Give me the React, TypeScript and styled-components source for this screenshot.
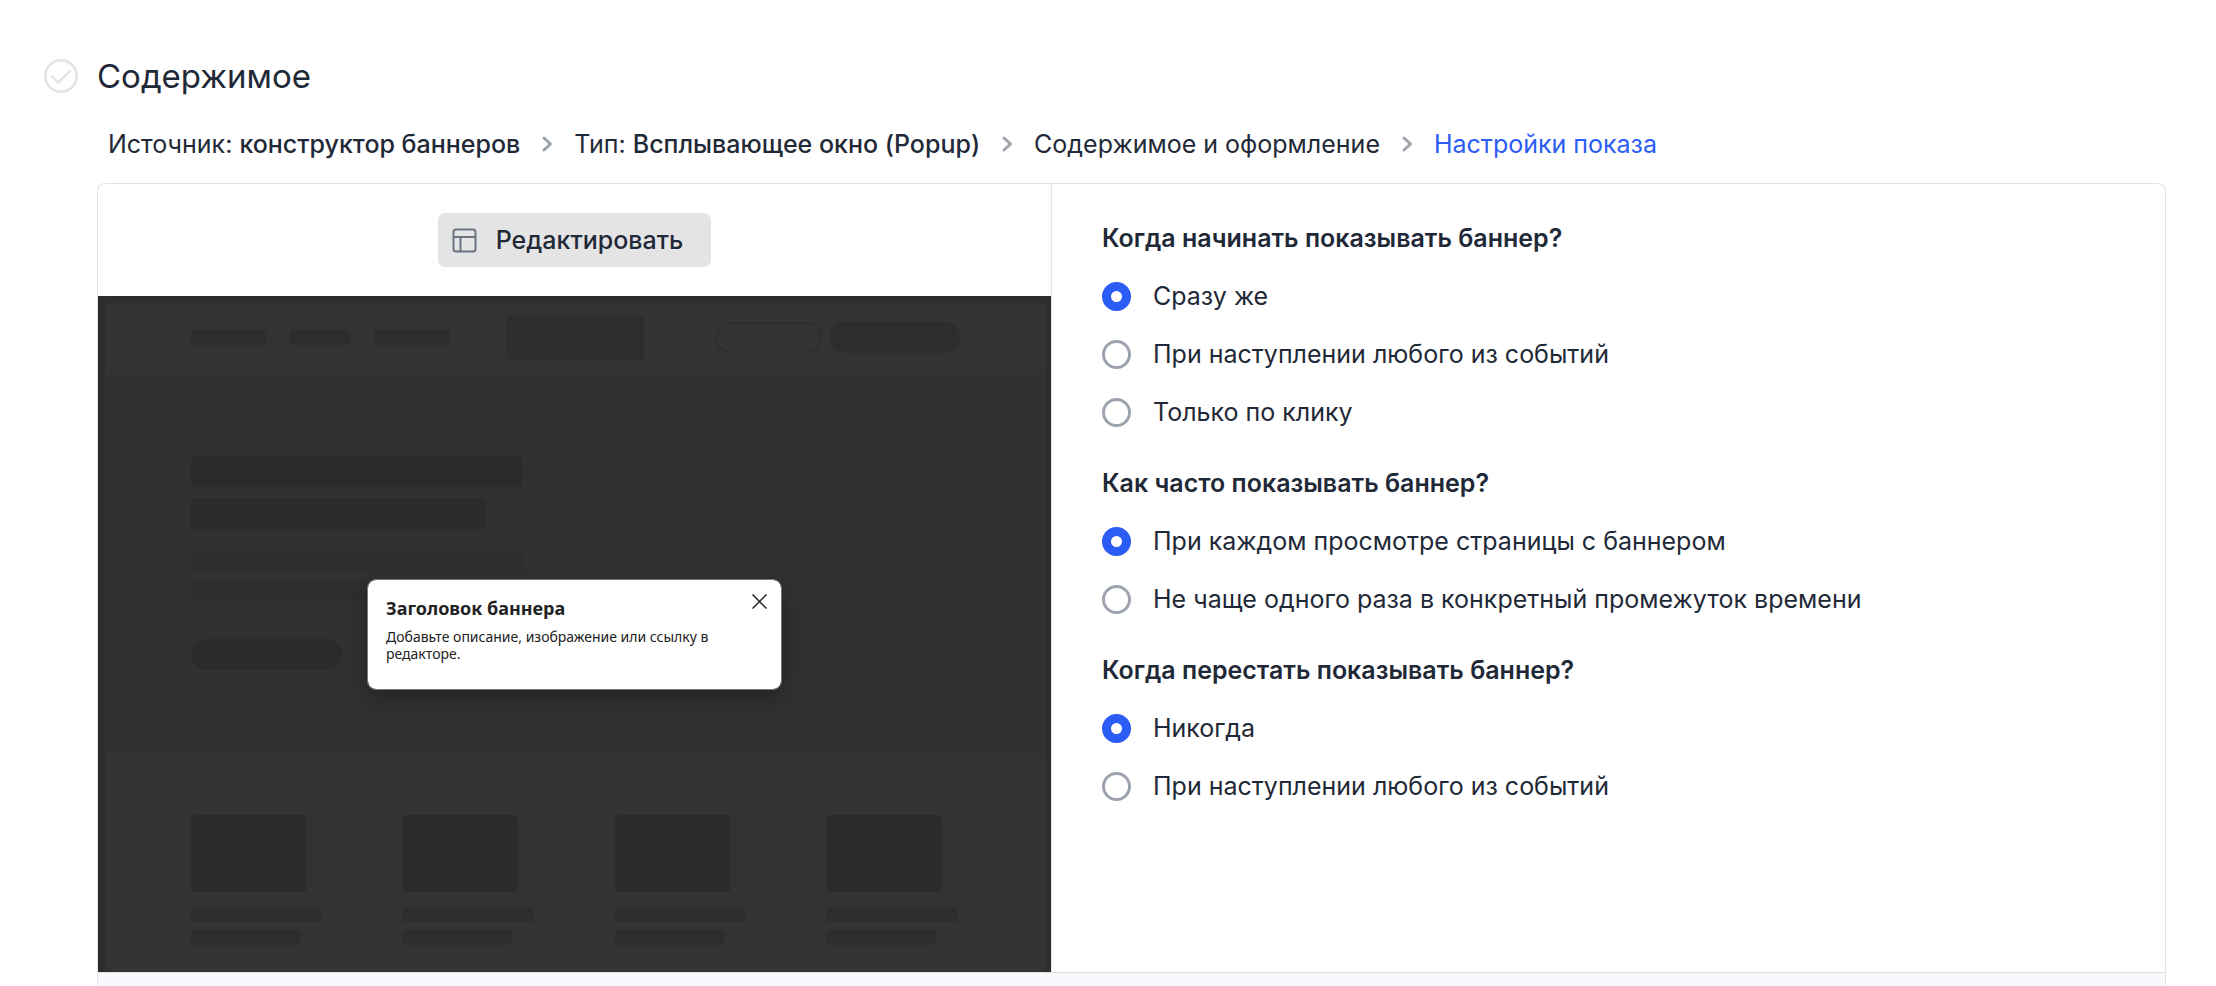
import React, { useState } from "react";
import styled, { createGlobalStyle } from "styled-components";

const GlobalStyle = createGlobalStyle`
  *, *::before, *::after { box-sizing: border-box; }
  body {
    margin: 0;
    background: #fff;
    color: #1f2937;
    font-family: Inter, "Liberation Sans", sans-serif;
    font-size: 25px;
    line-height: 30px;
  }
`;

const Page = styled.main`
  padding: 56px 50px 0 44px;
`;

const TitleRow = styled.header`
  display: flex;
  align-items: center;
  gap: 19px;
`;

const Title = styled.h1`
  margin: 0;
  font-size: 33px;
  line-height: 40px;
  font-weight: 400;
`;

const Content = styled.div`
  margin-left: 53px;
`;

const Breadcrumbs = styled.nav`
  padding: 33px 0 24px 11px;
`;

const CrumbList = styled.ol`
  display: flex;
  align-items: center;
  gap: 20px;
  margin: 0;
  padding: 0;
  list-style: none;
`;

const Crumb = styled.li`
  display: flex;
  align-items: center;
  gap: 22px;
`;

const CrumbLink = styled.a<{ $current?: boolean }>`
  color: ${(p) => (p.$current ? "#2b5cf6" : "inherit")};
  text-decoration: none;
  white-space: nowrap;
`;

const Strong = styled.strong`
  font-weight: 500;
`;

const Panel = styled.section`
  border: 1px solid #e4e4e4;
  border-bottom: 0;
  border-radius: 8px 8px 0 0;
  overflow: hidden;
`;

const Columns = styled.div`
  display: grid;
  grid-template-columns: 6fr 7fr;
`;

const PreviewColumn = styled.div`
  display: flex;
  flex-direction: column;
  border-right: 1px solid #e4e4e4;
`;

const Toolbar = styled.div`
  display: flex;
  justify-content: center;
  padding: 29px 0;
`;

const EditButton = styled.button`
  display: flex;
  align-items: center;
  gap: 19px;
  height: 54px;
  padding: 0 28px 0 14px;
  border: 0;
  border-radius: 7px;
  background: #e4e4e4;
  color: inherit;
  font: inherit;
  font-weight: 500;
  cursor: pointer;
`;

const Footer = styled.footer`
  height: 60px;
  border-top: 1px solid #e0e0e0;
  background: #f8f9fc;
`;

const Preview = styled.div`
  display: grid;
  background: #2d2d2d;
  & > * { grid-area: 1 / 1; }
`;

const Wireframe = styled.div`
  display: flex;
  flex-direction: column;
  padding: 7px 5px 0 7px;
`;

const WireHeader = styled.div`
  display: grid;
  grid-template-columns: 1fr auto 1fr;
  align-items: center;
  height: 69px;
  padding: 0 86px;
  background: #333;
`;

const WireNav = styled.div`
  display: flex;
  gap: 23px;
`;

const WireActions = styled.div`
  display: flex;
  justify-content: flex-end;
  gap: 8px;
`;

const WireHero = styled.div`
  display: flex;
  flex-direction: column;
  height: 382px;
  padding: 84px 86px 0;
  background: #313131;
`;

const WireLines = styled.div<{ $gap: number; $after: number }>`
  display: flex;
  flex-direction: column;
  gap: ${(p) => p.$gap}px;
  margin-bottom: ${(p) => p.$after}px;
`;

const WireCards = styled.div`
  display: flex;
  justify-content: space-between;
  height: 218px;
  padding: 61px 89px 0 86px;
  background: #333;
`;

const WireCard = styled.div`
  display: flex;
  flex-direction: column;
`;

const Block = styled.div<{ $w: number; $h: number; $tone?: "soft" | "faint" | "strong"; $round?: boolean }>`
  width: ${(p) => p.$w}px;
  height: ${(p) => p.$h}px;
  border-radius: ${(p) => (p.$round ? 16 : 4)}px;
  background: ${(p) => ({ soft: "#2d2d2d", faint: "#2e2e2e", strong: "#2a2b2d" })[p.$tone ?? "soft"]};
`;

const OutlineBlock = styled.div`
  width: 107px;
  height: 31px;
  border: 2px solid #2e2e2e;
  border-radius: 16px;
`;

const Popup = styled.div`
  display: flex;
  align-items: flex-start;
  place-self: center;
  width: 415px;
  height: 111px;
  padding: 14px 14px 0 18px;
  border: 1px solid #777;
  border-radius: 9px;
  background: #fff;
  background-clip: padding-box;
  color: #222;
  font-family: "Noto Sans", "Open Sans", sans-serif;
  box-shadow: 0 8px 24px rgba(0, 0, 0, 0.3);
`;

const PopupBody = styled.div`
  flex: 1;
`;

const PopupTitle = styled.h2`
  margin: 0 0 6px;
  font-size: 18px;
  line-height: 28px;
  font-weight: 700;
`;

const PopupText = styled.p`
  margin: 0;
  font-size: 14px;
  line-height: 17px;
`;

const CloseButton = styled.button`
  display: flex;
  padding: 0;
  border: 0;
  background: none;
  color: inherit;
  cursor: pointer;
`;

const Settings = styled.form`
  display: flex;
  flex-direction: column;
  gap: 41px;
  padding: 39px 50px;
`;

const Group = styled.fieldset`
  display: flex;
  flex-direction: column;
  align-items: flex-start;
  gap: 28px;
  min-width: 0;
  margin: 0;
  padding: 0;
  border: 0;
`;

const Legend = styled.legend`
  margin-bottom: 28px;
  padding: 0;
  font-weight: 600;
`;

const Option = styled.label`
  display: flex;
  align-items: center;
  gap: 22px;
  cursor: pointer;
`;

const Radio = styled.input`
  appearance: none;
  flex: none;
  width: 29px;
  height: 29px;
  margin: 0;
  border: 3px solid #9ca3af;
  border-radius: 50%;
  background: #fff;
  &:checked {
    border: 9px solid #2b5cf6;
  }
`;

const ChevronIcon = () => (
  <svg width="12" height="16" viewBox="0 0 12 16" fill="none" stroke="#9ca3af" strokeWidth="3" aria-hidden="true">
    <path d="M2 2l6.500 6L2 14" strokeLinecap="round" strokeLinejoin="round" />
  </svg>
);

const CheckIcon = () => (
  <svg width="34" height="34" viewBox="0 0 34 34" fill="none" stroke="#e3e3e3" strokeWidth="2.400" aria-hidden="true">
    <circle cx="17" cy="17" r="15.700" />
    <path d="M7.500 16.500l6.500 7L26.500 11.500" />
  </svg>
);

const LayoutIcon = () => (
  <svg width="25" height="25" viewBox="0 0 25 25" fill="none" stroke="#6b7280" strokeWidth="2" aria-hidden="true">
    <rect x="1.500" y="1.500" width="22" height="22" rx="2.500" />
    <path d="M1.500 9h22M8.500 9v14.500" />
  </svg>
);

const CloseIcon = () => (
  <svg width="15" height="15" viewBox="0 0 15 15" stroke="#222" strokeWidth="1.500" aria-hidden="true">
    <path d="M0.500 0.500l14 14M14.500 0.500l-14 14" />
  </svg>
);

const groups = [
  {
    name: "start",
    title: "Когда начинать показывать баннер?",
    options: ["Сразу же", "При наступлении любого из событий", "Только по клику"],
  },
  {
    name: "frequency",
    title: "Как часто показывать баннер?",
    options: ["При каждом просмотре страницы с баннером", "Не чаще одного раза в конкретный промежуток времени"],
  },
  {
    name: "stop",
    title: "Когда перестать показывать баннер?",
    options: ["Никогда", "При наступлении любого из событий"],
  },
];

function RadioGroup({ name, title, options }: { name: string; title: string; options: string[] }) {
  const [selected, setSelected] = useState(0);
  return (
    <Group>
      <Legend>{title}</Legend>
      {options.map((text, i) => (
        <Option key={text} htmlFor={`${name}-${i}`}>
          <Radio
            type="radio"
            id={`${name}-${i}`}
            name={name}
            checked={selected === i}
            onChange={() => setSelected(i)}
          />
          {text}
        </Option>
      ))}
    </Group>
  );
}

function SitePreview() {
  return (
    <Wireframe aria-hidden="true">
      <WireHeader>
        <WireNav>
          <Block $w={76} $h={15} />
          <Block $w={61} $h={15} />
          <Block $w={76} $h={15} />
        </WireNav>
        <Block $w={137} $h={45} />
        <WireActions>
          <OutlineBlock />
          <Block $w={130} $h={31} $round />
        </WireActions>
      </WireHeader>
      <WireHero>
        <WireLines $gap={11} $after={23}>
          <Block $w={332} $h={31} $tone="strong" />
          <Block $w={294} $h={31} $tone="strong" />
        </WireLines>
        <WireLines $gap={11} $after={38}>
          <Block $w={332} $h={19} $tone="faint" />
          <Block $w={294} $h={19} $tone="faint" />
        </WireLines>
        <Block $w={151} $h={31} $tone="strong" $round />
      </WireHero>
      <WireCards>
        {[0, 1, 2, 3].map((i) => (
          <WireCard key={i}>
            <WireLines $gap={0} $after={15}>
              <Block $w={115} $h={77} $tone="strong" />
            </WireLines>
            <WireLines $gap={8} $after={0}>
              <Block $w={130} $h={15} />
              <Block $w={109} $h={15} />
            </WireLines>
          </WireCard>
        ))}
      </WireCards>
    </Wireframe>
  );
}

export default function App() {
  return (
    <>
      <GlobalStyle />
      <Page>
        <TitleRow>
          <CheckIcon />
          <Title>Содержимое</Title>
        </TitleRow>
        <Content>
          <Breadcrumbs aria-label="Шаги">
            <CrumbList>
              <Crumb>
                <CrumbLink href="#source">
                  Источник: <Strong>конструктор баннеров</Strong>
                </CrumbLink>
                <ChevronIcon />
              </Crumb>
              <Crumb>
                <CrumbLink href="#type">
                  Тип: <Strong>Всплывающее окно (Popup)</Strong>
                </CrumbLink>
                <ChevronIcon />
              </Crumb>
              <Crumb>
                <CrumbLink href="#content">Содержимое и оформление</CrumbLink>
                <ChevronIcon />
              </Crumb>
              <Crumb>
                <CrumbLink href="#display" $current aria-current="step">
                  Настройки показа
                </CrumbLink>
              </Crumb>
            </CrumbList>
          </Breadcrumbs>
          <Panel>
            <Columns>
              <PreviewColumn>
                <Toolbar>
                  <EditButton type="button">
                    <LayoutIcon />
                    Редактировать
                  </EditButton>
                </Toolbar>
                <Preview>
                  <SitePreview />
                  <Popup>
                    <PopupBody>
                      <PopupTitle>Заголовок баннера</PopupTitle>
                      <PopupText>Добавьте описание, изображение или ссылку в редакторе.</PopupText>
                    </PopupBody>
                    <CloseButton type="button" aria-label="Закрыть">
                      <CloseIcon />
                    </CloseButton>
                  </Popup>
                </Preview>
              </PreviewColumn>
              <Settings>
                {groups.map((g) => (
                  <RadioGroup key={g.name} {...g} />
                ))}
              </Settings>
            </Columns>
            <Footer />
          </Panel>
        </Content>
      </Page>
    </>
  );
}
